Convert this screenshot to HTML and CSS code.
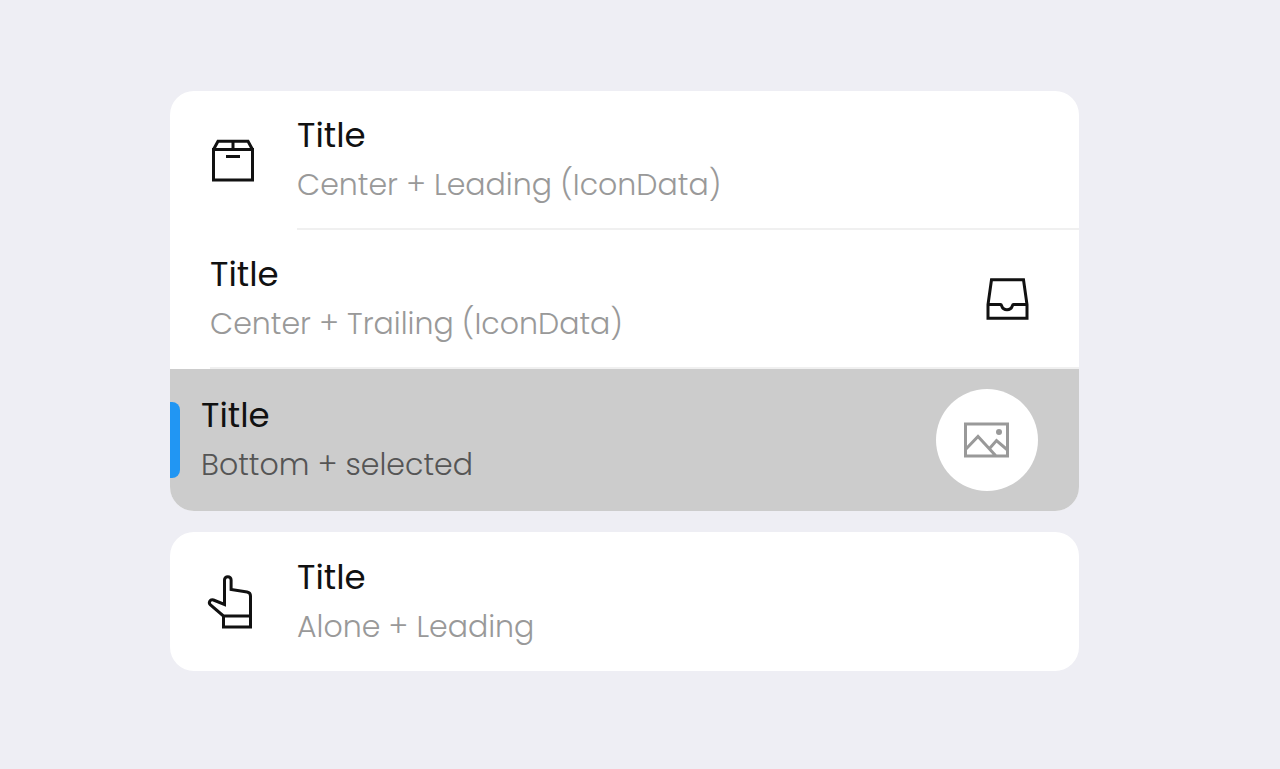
FILE: index.html
```html
<!DOCTYPE html>
<html lang="en">
<head>
  <meta charset="UTF-8">
  <meta name="viewport" content="width=device-width, initial-scale=1.0">
  <title>List Tiles</title>
  <link rel="stylesheet" href="styles.css">
</head>
<body>
  <main class="page">
    <ul class="card">
      <li class="tile">
        <svg class="icon leading" viewBox="0 0 56 56" aria-hidden="true">
          <path d="M8.5 16.5h39v30.5h-39z M8.5 16.5L13 8.2h30l4.5 8.3 M28 8.2v8.3 M21 23.5h14"/>
        </svg>
        <div class="content divider">
          <div class="text">
            <h2>Title</h2>
            <p>Center + Leading (IconData)</p>
          </div>
        </div>
      </li>

      <li class="tile">
        <div class="content divider">
          <div class="text">
            <h2>Title</h2>
            <p>Center + Trailing (IconData)</p>
          </div>
          <svg class="icon trailing" viewBox="0 0 56 56" aria-hidden="true">
            <path d="M12.5 8.8h32l3.5 24.7v13.8H9V33.500z M9 33.500h12.500c1 0 1 1 1.200 1.500a5.600 5.600 0 0 0 10.600 0c.2-.5.200-1.500 1.200-1.500H48"/>
          </svg>
        </div>
      </li>

      <li class="tile selected">
        <span class="marker"></span>
        <div class="content">
          <div class="text">
            <h2>Title</h2>
            <p>Bottom + selected</p>
          </div>
          <span class="avatar">
            <svg class="picture" viewBox="0 0 48 40" aria-hidden="true">
              <path d="M2.500 4h42v32h-42z M2.500 29.500L15 16.500 33 36 M26.500 28.500L33.500 20.500 44.500 30"/>
              <circle cx="36" cy="12" r="3"/>
            </svg>
          </span>
        </div>
      </li>
    </ul>

    <ul class="card">
      <li class="tile">
        <svg class="icon leading" viewBox="0 0 56 56" aria-hidden="true">
          <path d="M19.500 30.500V6a3.300 3.300 0 0 1 6.600 0v9.500l16 2.500c2 .4 3.400 2 3.400 4v31h-27V42L5.500 31c-2.500-2.500-.5-6 3-5z M18.500 42h27"/>
        </svg>
        <div class="content">
          <div class="text">
            <h2>Title</h2>
            <p>Alone + Leading</p>
          </div>
        </div>
      </li>
    </ul>
  </main>
</body>
</html>
```

FILE: styles.css
```css
* {
  box-sizing: border-box;
}

body {
  margin: 0;
  background-color: #eeeef4;
  font-family: Poppins, Inter, sans-serif;
  font-weight: 300;
}

.page {
  display: flex;
  flex-direction: column;
  gap: 21px;
  padding: 91px 201px 91px 170px;
}

/* Card */
.card {
  margin: 0;
  padding: 0;
  list-style: none;
  background-color: #ffffff;
  border-radius: 24px;
  overflow: hidden;
}

/* Tile */
.tile {
  display: flex;
  align-items: center;
  min-height: 139px;
  padding-left: 40px;
}

.content {
  flex: 1;
  display: flex;
  align-items: center;
  justify-content: space-between;
  min-height: 139px;
}

.divider {
  border-bottom: 2px solid #f0f0f0;
}

.text h2 {
  margin: 0;
  font-size: 34px;
  font-weight: 400;
  line-height: 50px;
  color: #111111;
}

.text p {
  margin: 0;
  font-size: 30px;
  line-height: 50px;
  color: #999999;
}

/* Selected tile */
.selected {
  min-height: 142px;
  padding-left: 0;
  background-color: #cccccc;
}

.selected p {
  color: #555555;
}

.marker {
  width: 10px;
  height: 76px;
  margin-right: 21px;
  background-color: #2196f3;
  border-radius: 0 8px 8px 0;
}

/* Icons */
.icon {
  width: 56px;
  height: 56px;
  fill: none;
  stroke: #111111;
  stroke-width: 3;
}

.leading {
  margin-left: -5px;
  margin-right: 36px;
}

.trailing {
  margin-right: 44px;
}

.avatar {
  display: flex;
  align-items: center;
  justify-content: center;
  width: 102px;
  height: 102px;
  margin-right: 41px;
  background-color: #ffffff;
  border-radius: 50%;
}

.picture {
  width: 48px;
  height: 40px;
  fill: none;
  stroke: #999999;
  stroke-width: 3;
}

.picture circle {
  fill: #999999;
  stroke: none;
}
```
